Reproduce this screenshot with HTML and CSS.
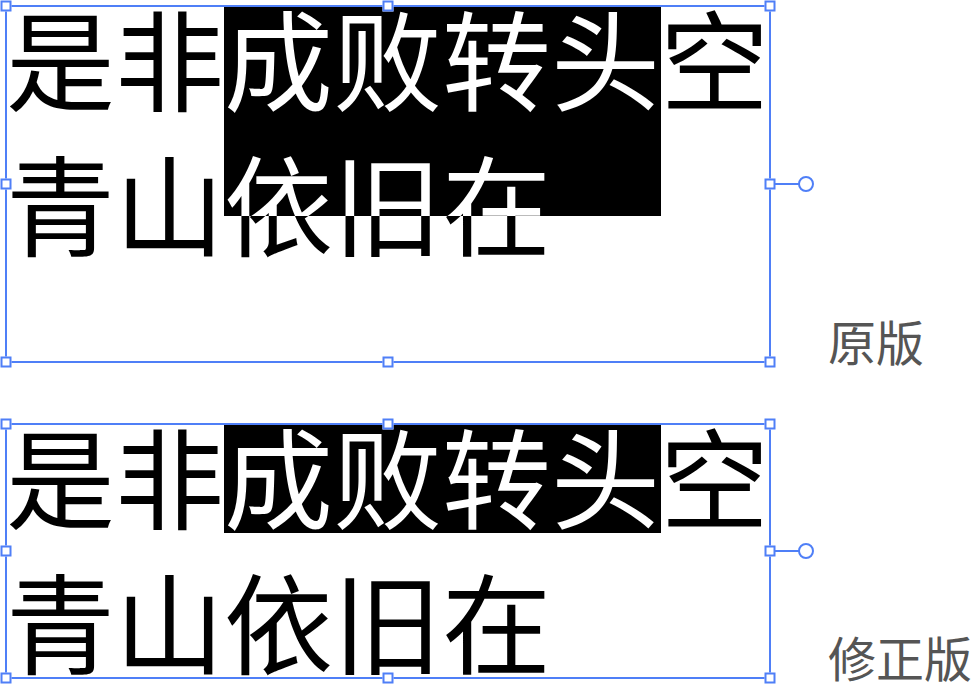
FILE: index.html
```html
<!DOCTYPE html>
<html lang="zh-CN">
<head>
<meta charset="utf-8">
<title>原版 / 修正版</title>
<link rel="stylesheet" href="styles.css">
</head>
<body>
<main class="page">
  <section class="row">
    <div class="frame frame-original">
      <p class="verse"><span class="line">是非成败转头空</span><span class="line">青山依旧在</span></p>
      <div class="highlight highlight-original"></div>
      <div class="bounds"></div>
      <span class="handle h-tl"></span>
      <span class="handle h-tc"></span>
      <span class="handle h-tr"></span>
      <span class="handle h-ml"></span>
      <span class="handle h-mr"></span>
      <span class="handle h-bl"></span>
      <span class="handle h-bc"></span>
      <span class="handle h-br"></span>
      <span class="rot-line"></span>
      <span class="rot-knob"></span>
    </div>
    <div class="label">原版</div>
  </section>
  <section class="row row-second">
    <div class="frame frame-fixed">
      <p class="verse"><span class="line">是非成败转头空</span><span class="line">青山依旧在</span></p>
      <div class="highlight highlight-fixed"></div>
      <div class="bounds"></div>
      <span class="handle h-tl"></span>
      <span class="handle h-tc"></span>
      <span class="handle h-tr"></span>
      <span class="handle h-ml"></span>
      <span class="handle h-mr"></span>
      <span class="handle h-bl"></span>
      <span class="handle h-bc"></span>
      <span class="handle h-br"></span>
      <span class="rot-line"></span>
      <span class="rot-knob"></span>
    </div>
    <div class="label">修正版</div>
  </section>
</main>
</body>
</html>
```
FILE: styles.css
```css
html, body {
  margin: 0;
  padding: 0;
  background: #ffffff;
}

body {
  min-height: 684px;
}

.page {
  padding: 6px 0 0 6px;
  display: flex;
  flex-direction: column;
  font-family: "Noto Sans CJK SC", "Noto Sans", sans-serif;
}

.row {
  display: flex;
  align-items: flex-end;
}

.row-second {
  margin-top: 62px;
}

.frame {
  position: relative;
  width: 764px;
  background: #ffffff;
  isolation: isolate;
  flex: none;
}

.frame-original {
  height: 356px;
}

.frame-fixed {
  height: 254px;
}

.verse {
  margin: 0;
  display: flex;
  flex-direction: column;
  gap: 46px;
  font-size: 109px;
  font-weight: 400;
  color: #000000;
  white-space: nowrap;
}

.line {
  display: block;
  line-height: 99px;
}

.highlight {
  position: absolute;
  left: 218px;
  width: 437px;
  top: 1px;
  background: #ffffff;
  mix-blend-mode: difference;
}

.highlight-original {
  height: 209px;
}

.highlight-fixed {
  height: 108px;
}

.bounds {
  position: absolute;
  inset: -1px;
  border: 2px solid #4f7ff7;
}

.handle {
  position: absolute;
  width: 11px;
  height: 11px;
  box-sizing: border-box;
  border: 2px solid #4f7ff7;
  background: #ffffff;
  transform: translate(-50%, -50%);
}

.h-tl { left: 0; top: 0; }
.h-tc { left: 50%; top: 0; }
.h-tr { left: 100%; top: 0; }
.h-ml { left: 0; top: 50%; }
.h-mr { left: 100%; top: 50%; }
.h-bl { left: 0; top: 100%; }
.h-bc { left: 50%; top: 100%; }
.h-br { left: 100%; top: 100%; }

.rot-line {
  position: absolute;
  left: calc(100% + 5px);
  top: 50%;
  width: 24px;
  height: 2px;
  margin-top: -1px;
  background: #4f7ff7;
}

.rot-knob {
  position: absolute;
  left: calc(100% + 28px);
  top: 50%;
  width: 16px;
  height: 16px;
  box-sizing: border-box;
  border: 2px solid #4f7ff7;
  border-radius: 50%;
  background: #ffffff;
  transform: translateY(-50%);
}

.label {
  margin-left: 58px;
  margin-bottom: -2px;
  font-size: 48px;
  line-height: 48px;
  color: #555555;
  white-space: nowrap;
}
```
